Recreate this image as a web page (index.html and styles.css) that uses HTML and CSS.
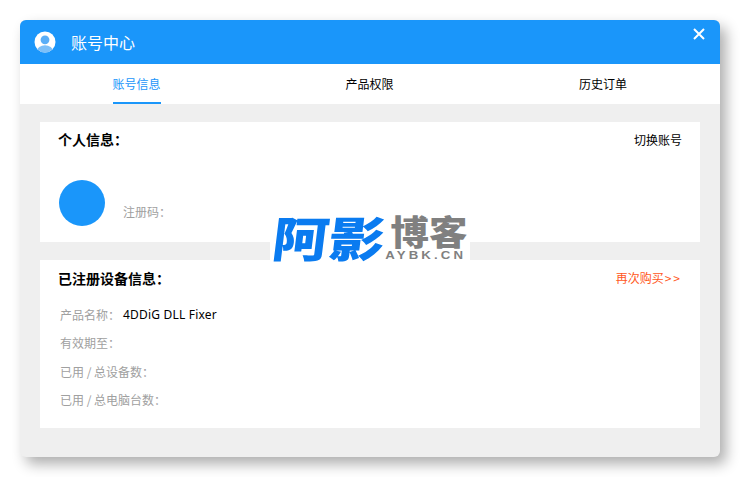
FILE: index.html
```html
<!DOCTYPE html>
<html lang="zh-CN">
<head>
<meta charset="utf-8">
<title>账号中心</title>
<link rel="stylesheet" href="styles.css">
</head>
<body>
<div class="dialog">
  <header class="titlebar">
    <svg class="avatar-icon" width="22" height="22" viewBox="0 0 22 22">
      <defs><clipPath id="c"><circle cx="11" cy="11" r="10.5"/></clipPath></defs>
      <circle cx="11" cy="11" r="10.5" fill="#fff"/>
      <g clip-path="url(#c)">
        <circle cx="11" cy="8.8" r="4.4" fill="#5aaef7"/>
        <ellipse cx="11" cy="20" rx="8" ry="5.8" fill="#7cbff8"/>
      </g>
    </svg>
    <span class="title">账号中心</span>
    <svg class="close" width="12" height="12" viewBox="0 0 12 12"><path d="M1 1L11 11M11 1L1 11" stroke="#fff" stroke-width="2" fill="none"/></svg>
  </header>
  <nav class="tabs">
    <div class="tab active"><span class="tab-label">账号信息</span></div>
    <div class="tab"><span class="tab-label">产品权限</span></div>
    <div class="tab"><span class="tab-label">历史订单</span></div>
  </nav>
  <main class="content">
    <section class="card card-person">
      <div class="card-head card-head-person">
        <h2 class="card-title">个人信息：</h2>
        <span class="link">切换账号</span>
      </div>
      <div class="person">
        <div class="avatar"></div>
        <span class="label person-label">注册码：</span>
      </div>
    </section>
    <section class="card card-device">
      <div class="card-head">
        <h2 class="card-title">已注册设备信息：</h2>
        <span class="link link-buy">再次购买<span class="arrows">&gt;&gt;</span></span>
      </div>
      <div class="rows">
        <div class="row"><span class="label row-label">产品名称：</span><span class="value">4DDiG DLL Fixer</span></div>
        <div class="row"><span class="label">有效期至：</span></div>
        <div class="row"><span class="label">已用 / 总设备数：</span></div>
        <div class="row"><span class="label">已用 / 总电脑台数：</span></div>
      </div>
    </section>
  </main>
</div>
<div class="watermark">
  <span class="wm-blue">阿影</span>
  <span class="wm-side"><span class="wm-cn">博客</span><span class="wm-en">AYBK.CN</span></span>
</div>
</body>
</html>
```
FILE: styles.css
```css
* { box-sizing: border-box; }
html, body { margin: 0; height: 100%; background: #fff; overflow: hidden; }
body {
  padding: 20px;
  font-family: "Noto Sans CJK SC", "Noto Sans", sans-serif;
  font-size: 12px;
  color: #000;
}
.dialog {
  width: 700px;
  height: 437px;
  display: flex;
  flex-direction: column;
  border-radius: 6px;
  overflow: hidden;
  background: #efefef;
  box-shadow: 6px 7px 14px rgba(0, 0, 0, .32);
}
.titlebar {
  height: 44px;
  flex: none;
  background: #1a96fa;
  display: flex;
  align-items: center;
  padding: 0 15px 0 14px;
  color: #fff;
}
.avatar-icon { flex: none; margin-right: 15px; margin-top: -1px; }
.title { font-size: 16px; line-height: 44px; flex: 1; }
.close { align-self: flex-start; margin-top: 8px; }
.tabs {
  height: 40px;
  flex: none;
  background: #fff;
  display: grid;
  grid-template-columns: 233px 233px 234px;
}
.tab { display: flex; justify-content: center; }
.tab-label {
  width: 48px;
  height: 40px;
  line-height: 40px;
  font-size: 12px;
  white-space: nowrap;
}
.active .tab-label { color: #1a96fa; border-bottom: 2px solid #1a96fa; }
.content {
  flex: 1;
  padding: 18px 20px 0;
  display: flex;
  flex-direction: column;
  gap: 18px;
}
.card { background: #fff; padding: 0 18px; }
.card-person { height: 120px; }
.card-device { height: 168px; }
.card-head {
  height: 36px;
  display: flex;
  justify-content: space-between;
  align-items: center;
}
.card-head-person { height: 35px; }
.card-title { margin: 0; font-size: 14px; line-height: 35px; font-weight: 700; }
.link { font-size: 12px; white-space: nowrap; }
.link-buy { color: #ff5722; margin-top: -2px; }
.arrows { letter-spacing: 2px; margin-left: 1px; }
.person { display: flex; align-items: flex-start; height: 69px; margin-left: 1px; padding-top: 23px; }
.avatar { width: 46px; height: 46px; border-radius: 50%; background: #1a96fa; margin-right: 18px; }
.person-label { margin-top: 23px; }
.label { color: #a0a0a0; font-size: 12px; line-height: 17px; }
.rows { display: flex; flex-direction: column; gap: 11.3px; padding: 10px 0 0 2px; }
.row { height: 17px; display: flex; align-items: center; white-space: nowrap; }
.row-label { width: 63px; }
.value { font-family: "Noto Sans", sans-serif; font-size: 12px; letter-spacing: .2px; }
.watermark {
  position: absolute;
  left: 270px;
  top: 212px;
  width: 200px;
  height: 50px;
  background: linear-gradient(transparent 60%, #fff 60%);
  white-space: nowrap;
  display: flex;
  padding-left: 3px;
}
.wm-blue {
  width: 112px;
  flex: none;
  color: #0a7bf0;
  font-size: 48px;
  line-height: 48px;
  height: 50px;
  font-weight: 900;
  transform-origin: left center;
  transform: scaleX(1.17) skewX(-6deg);
}
.wm-side { width: 82px; flex: none; display: flex; flex-direction: column; align-items: center; }
.wm-cn {
  color: #808080;
  font-size: 34px;
  line-height: 38px;
  height: 38px;
  font-weight: 900;
  transform: scaleX(1.13);
  margin-left: 5px;
}
.wm-en {
  color: #808080;
  font-size: 11px;
  line-height: 11px;
  font-weight: 700;
  font-family: "Liberation Sans", sans-serif;
  letter-spacing: 2.6px;
  transform: scaleX(1.2);
}
```
